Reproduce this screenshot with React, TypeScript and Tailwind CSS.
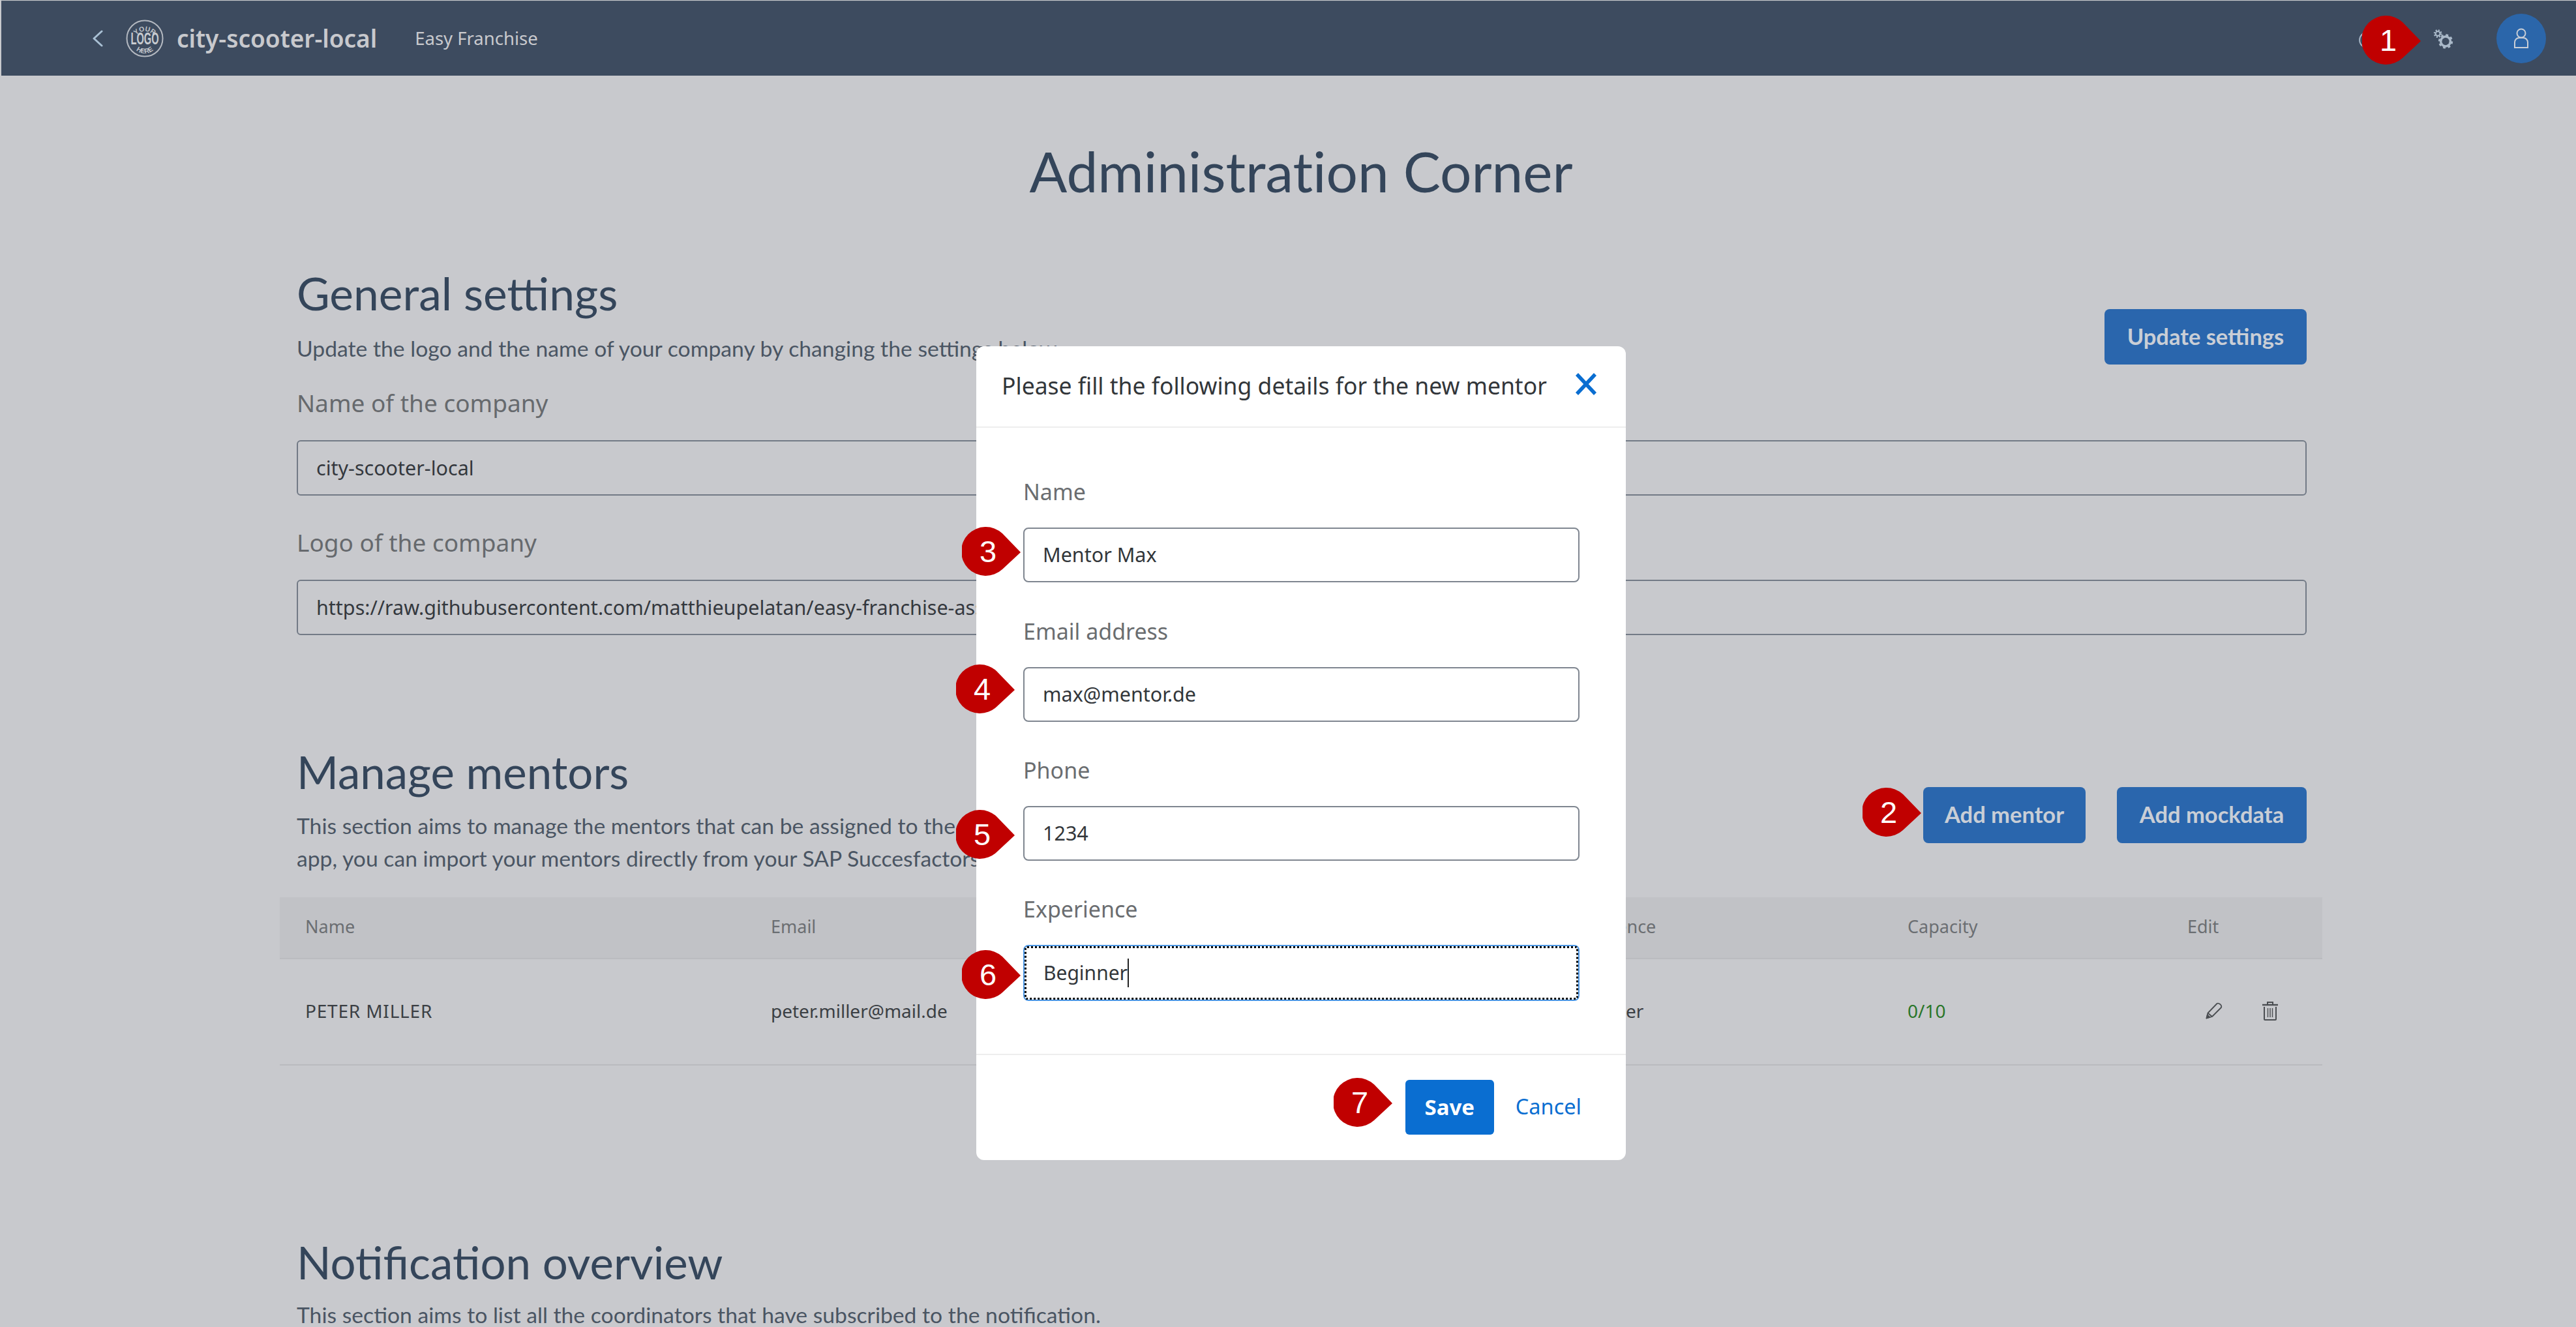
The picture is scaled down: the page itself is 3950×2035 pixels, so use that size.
import React from "react";

function Badge({ n, className }: { n: number; className: string }) {
  return (
    <div className={`absolute w-[90px] h-[75px] ${className}`}>
      <svg viewBox="0 0 90 75" className="absolute inset-0 w-full h-full">
        <path d="M62 10 L90 39 L62 65 A37.5 37.5 0 1 1 62 10 Z" fill="#c00000" />
      </svg>
      <span className="absolute left-0 top-0 w-[80px] h-[75px] flex items-center justify-center text-white text-[47px] leading-none font-['Liberation_Sans',sans-serif]">
        {n}
      </span>
    </div>
  );
}

function Gear({ cx, cy, r, w }: { cx: number; cy: number; r: number; w: number }) {
  const c = 2 * Math.PI * (r + 1);
  return (
    <g fill="none" stroke="#a9b8c8">
      <circle cx={cx} cy={cy} r={r} strokeWidth={w} />
      <circle cx={cx} cy={cy} r={r + 1} strokeWidth={w + 2} strokeDasharray={`${c / 16} ${c / 16}`} />
    </g>
  );
}

function MainField({ label, value, className }: { label: string; value: string; className: string }) {
  return (
    <div className={className}>
      <div className="h-[50px] leading-[50px] text-[37px] text-[#66696d]">{label}</div>
      <div className="mt-[32px] h-[85px] border-2 border-[#727a86] rounded-[6px] pl-[28px] flex items-center text-[30.5px] text-[#34383e] whitespace-nowrap overflow-hidden">
        {value}
      </div>
    </div>
  );
}

function ModalField({ label, value, focus, className }: { label: string; value: string; focus?: boolean; className: string }) {
  return (
    <div className={className}>
      <div className="h-[48px] leading-[48px] text-[34px] text-[#6a6d70]">{label}</div>
      {focus ? (
        <div className="mt-[31px] h-[86px] rounded-[8px] border-2 border-[#4d97e4]">
          <div className="h-full rounded-[4px] border-[3px] border-dotted border-black pl-[26px] flex items-center text-[30px] text-[#32363a]">
            <span className="border-r-2 border-[#222] leading-[44px]">{value}</span>
          </div>
        </div>
      ) : (
        <div className="mt-[31px] h-[84px] rounded-[8px] border-2 border-[#7f8690] pl-[28px] flex items-center text-[30.5px] text-[#32363a]">
          {value}
        </div>
      )}
    </div>
  );
}

export default function App() {
  return (
    <div className="relative w-[3950px] h-[2035px] overflow-hidden bg-[#c8c9cd] font-['Noto_Sans',sans-serif]">
      <header className="ml-[2px] mt-[1px] h-[115px] bg-[#3d4b5f] border-t border-[#4a5769] flex items-center">
        <svg viewBox="0 0 16 26" className="ml-[140px] w-[16px] h-[26px]" fill="none" stroke="#a9c0d4" strokeWidth="3" strokeLinecap="round" strokeLinejoin="round">
          <path d="M14 2 L2 13 L14 24" />
        </svg>
        <svg viewBox="0 0 58 58" className="ml-[35px] w-[58px] h-[58px]">
          <defs>
            <path id="topArc" d="M11 36 A18 18 0 0 1 47 36" />
            <path id="botArc" d="M9 32 A20 20 0 0 0 49 32" />
          </defs>
          <circle cx="29" cy="29" r="27.5" fill="none" stroke="#b4b9c1" strokeWidth="2" />
          <text fontSize="10.5" fontWeight="700" fill="#c0c4ca" fontFamily="Liberation Sans, sans-serif" textAnchor="middle">
            <textPath href="#topArc" startOffset="50%">YOUR</textPath>
          </text>
          <text x="29" y="38" fontSize="25" fontWeight="700" fill="#c8ccd1" fontFamily="Liberation Sans, sans-serif" textAnchor="middle" textLength="43" lengthAdjust="spacingAndGlyphs">LOGO</text>
          <text fontSize="10.5" fontWeight="700" fill="#c0c4ca" fontFamily="Liberation Sans, sans-serif" textAnchor="middle">
            <textPath href="#botArc" startOffset="50%">HERE</textPath>
          </text>
        </svg>
        <span className="ml-[20px] text-[37px] font-semibold text-[#c8c9cd]">city-scooter-local</span>
        <span className="ml-[58px] text-[27.5px] text-[#c8c9cd]">Easy Franchise</span>
        <svg viewBox="0 0 320 116" className="ml-auto w-[320px] h-[115px]" fill="none">
          <circle cx="33" cy="60" r="12" stroke="#a9b8c8" strokeWidth="2" />
          <Gear cx={154} cy={62} r={7.5} w={3.5} />
          <Gear cx={142} cy={50} r={3.5} w={2} />
        </svg>
        <div className="ml-[-88px] mr-[46px] w-[76px] h-[76px] rounded-full bg-[#2b66aa] flex items-center justify-center shrink-0">
          <svg viewBox="0 0 24 32" className="w-[24px] h-[32px]" fill="none" stroke="#c9ced6" strokeWidth="2">
            <circle cx="12" cy="8" r="6.5" />
            <path d="M2 30 V22 A7 7 0 0 1 9 15 H15 A7 7 0 0 1 22 22 V30 Z" />
          </svg>
        </div>
      </header>

      <main className="ml-[429px] w-[3132px]">
        <h1 className="pt-[96px] h-[198px] text-center text-[85.5px] leading-[100px] text-[#34455a] font-['Lato',sans-serif] [font-variant-ligatures:none]">
          Administration Corner
        </h1>

        <section className="mt-[95px] pl-[26px] pr-[24px]">
          <div className="flex items-start justify-between">
            <div>
              <h2 className="h-[80px] leading-[80px] text-[69.5px] text-[#34455a] font-['Lato',sans-serif]">General settings</h2>
              <p className="mt-[20px] h-[50px] leading-[50px] text-[33.7px] text-[#4a5563] font-['Lato',sans-serif] whitespace-nowrap">
                Update the logo and the name of your company by changing the settings below.
              </p>
            </div>
            <button className="mt-[65px] pb-[2px] w-[310px] h-[85px] rounded-[8px] bg-[#2a66ad] text-[34.5px] font-bold text-[#c9ced6] font-['Lato',sans-serif]">
              Update settings
            </button>
          </div>
          <MainField label="Name of the company" value="city-scooter-local" className="mt-[34px]" />
          <MainField
            label="Logo of the company"
            value="https://raw.githubusercontent.com/matthieupelatan/easy-franchise-assets/main/logo.png"
            className="mt-[47px]"
          />
        </section>

        <section className="mt-[170px]">
          <div className="pl-[26px] pr-[24px] flex items-start justify-between">
            <div>
              <h2 className="h-[80px] leading-[80px] text-[69px] text-[#34455a] font-['Lato',sans-serif]">Manage mentors</h2>
              <p className="mt-[17px] leading-[50px] text-[33.7px] text-[#4a5563] font-['Lato',sans-serif] whitespace-nowrap">
                This section aims to manage the mentors that can be assigned to the coordinators.
                <br />
                app, you can import your mentors directly from your SAP Succesfactors.
              </p>
            </div>
            <div className="mt-[63px] flex gap-[48px]">
              <button className="pb-[2px] w-[249px] h-[86px] rounded-[8px] bg-[#2a66ad] text-[34.5px] font-bold text-[#c9ced6] font-['Lato',sans-serif]">
                Add mentor
              </button>
              <button className="pb-[2px] w-[291px] h-[86px] rounded-[8px] bg-[#2a66ad] text-[34.5px] font-bold text-[#c9ced6] font-['Lato',sans-serif]">
                Add mockdata
              </button>
            </div>
          </div>
          <div className="mt-[35px] h-[95px] pb-[3px] bg-[#c1c2c6] border-b-2 border-[#babbbf] pl-[39px] grid grid-cols-[714px_1218px_525px_429px_1fr] items-center text-[27px] text-[#6b6e72]">
            <span>Name</span>
            <span>Email</span>
            <span>Experience</span>
            <span>Capacity</span>
            <span>Edit</span>
          </div>
          <div className="h-[163px] pb-[3px] border-b-2 border-[#babbbf] pl-[39px] grid grid-cols-[714px_1218px_525px_429px_1fr] items-center text-[28px] text-[#3b3f44]">
            <span className="tracking-[0.8px]">PETER MILLER</span>
            <span>peter.miller@mail.de</span>
            <span>Beginner</span>
            <span className="text-[#2a762a]">0/10</span>
            <span className="flex items-center">
              <svg viewBox="0 0 26 26" className="ml-[28px] w-[26px] h-[26px]" fill="none" stroke="#4b4e52" strokeWidth="1.8" strokeLinejoin="round">
                <path d="M1.5 24.5 L3.5 16.5 L17.5 2 Q19.5 0.8 22.5 3.2 Q25 5.5 24 8 L10 22 Z" />
                <path d="M3.5 16.5 L10 22" />
                <path d="M1.5 24.5 L2.8 19.5 L6.5 22.8 Z" fill="#4b4e52" />
              </svg>
              <svg viewBox="0 0 26 30" className="ml-[60px] w-[26px] h-[30px]" fill="none" stroke="#4b4e52" strokeWidth="2">
                <path d="M1 6 H25" strokeWidth="2.4" />
                <path d="M9 5 V2 H17 V5" />
                <path d="M4 9 V28 Q4 29 5 29 H21 Q22 29 22 28 V9" />
                <path d="M9.5 11 V25 M13 11 V25 M16.5 11 V25" strokeWidth="1.4" />
              </svg>
            </span>
          </div>
        </section>

        <section className="mt-[262px] pl-[26px] pr-[24px]">
          <h2 className="h-[80px] leading-[80px] text-[69px] text-[#34455a] font-['Lato',sans-serif]">Notification overview</h2>
          <p className="mt-[23px] h-[34px] leading-[34px] text-[33.7px] text-[#4a5563] font-['Lato',sans-serif] whitespace-nowrap">
            This section aims to list all the coordinators that have subscribed to the notification.
          </p>
        </section>
      </main>

      <div className="absolute left-[1497px] top-[531px] w-[996px] h-[1248px] rounded-[12px] bg-white flex flex-col">
        <div className="h-[125px] shrink-0 border-b-2 border-[#eeeeee] pl-[39px] pr-[44px] pb-[2px] flex items-center justify-between">
          <span className="text-[35.5px] text-[#32363a] whitespace-nowrap">Please fill the following details for the new mentor</span>
          <svg viewBox="0 0 34 34" className="w-[34px] h-[34px] mb-[6px]" fill="none" stroke="#0a6ed1" strokeWidth="5.5">
            <path d="M3 2 L31 32 M31 2 L3 32" />
          </svg>
        </div>
        <div className="flex-1 pl-[72px] pr-[71px] pt-[74px]">
          <ModalField label="Name" value="Mentor Max" className="" />
          <ModalField label="Email address" value="max@mentor.de" className="mt-[51px]" />
          <ModalField label="Phone" value="1234" className="mt-[50px]" />
          <ModalField label="Experience" value="Beginner" focus className="mt-[50px]" />
        </div>
        <div className="h-[163px] shrink-0 border-t-2 border-[#eeeeee] pr-[68px] pb-[2px] flex items-center justify-end gap-[33px]">
          <button className="w-[136px] h-[84px] rounded-[6px] bg-[#0a6ed1] text-white text-[33px] font-bold">Save</button>
          <span className="text-[32.5px] text-[#0a6ed1]">Cancel</span>
        </div>
      </div>

      <Badge n={1} className="left-[3622px] top-[24px]" />
      <Badge n={2} className="left-[2856px] top-[1208px]" />
      <Badge n={3} className="left-[1475px] top-[808px]" />
      <Badge n={4} className="left-[1466px] top-[1019px]" />
      <Badge n={5} className="left-[1466px] top-[1242px]" />
      <Badge n={6} className="left-[1475px] top-[1457px]" />
      <Badge n={7} className="left-[2045px] top-[1653px]" />
    </div>
  );
}
